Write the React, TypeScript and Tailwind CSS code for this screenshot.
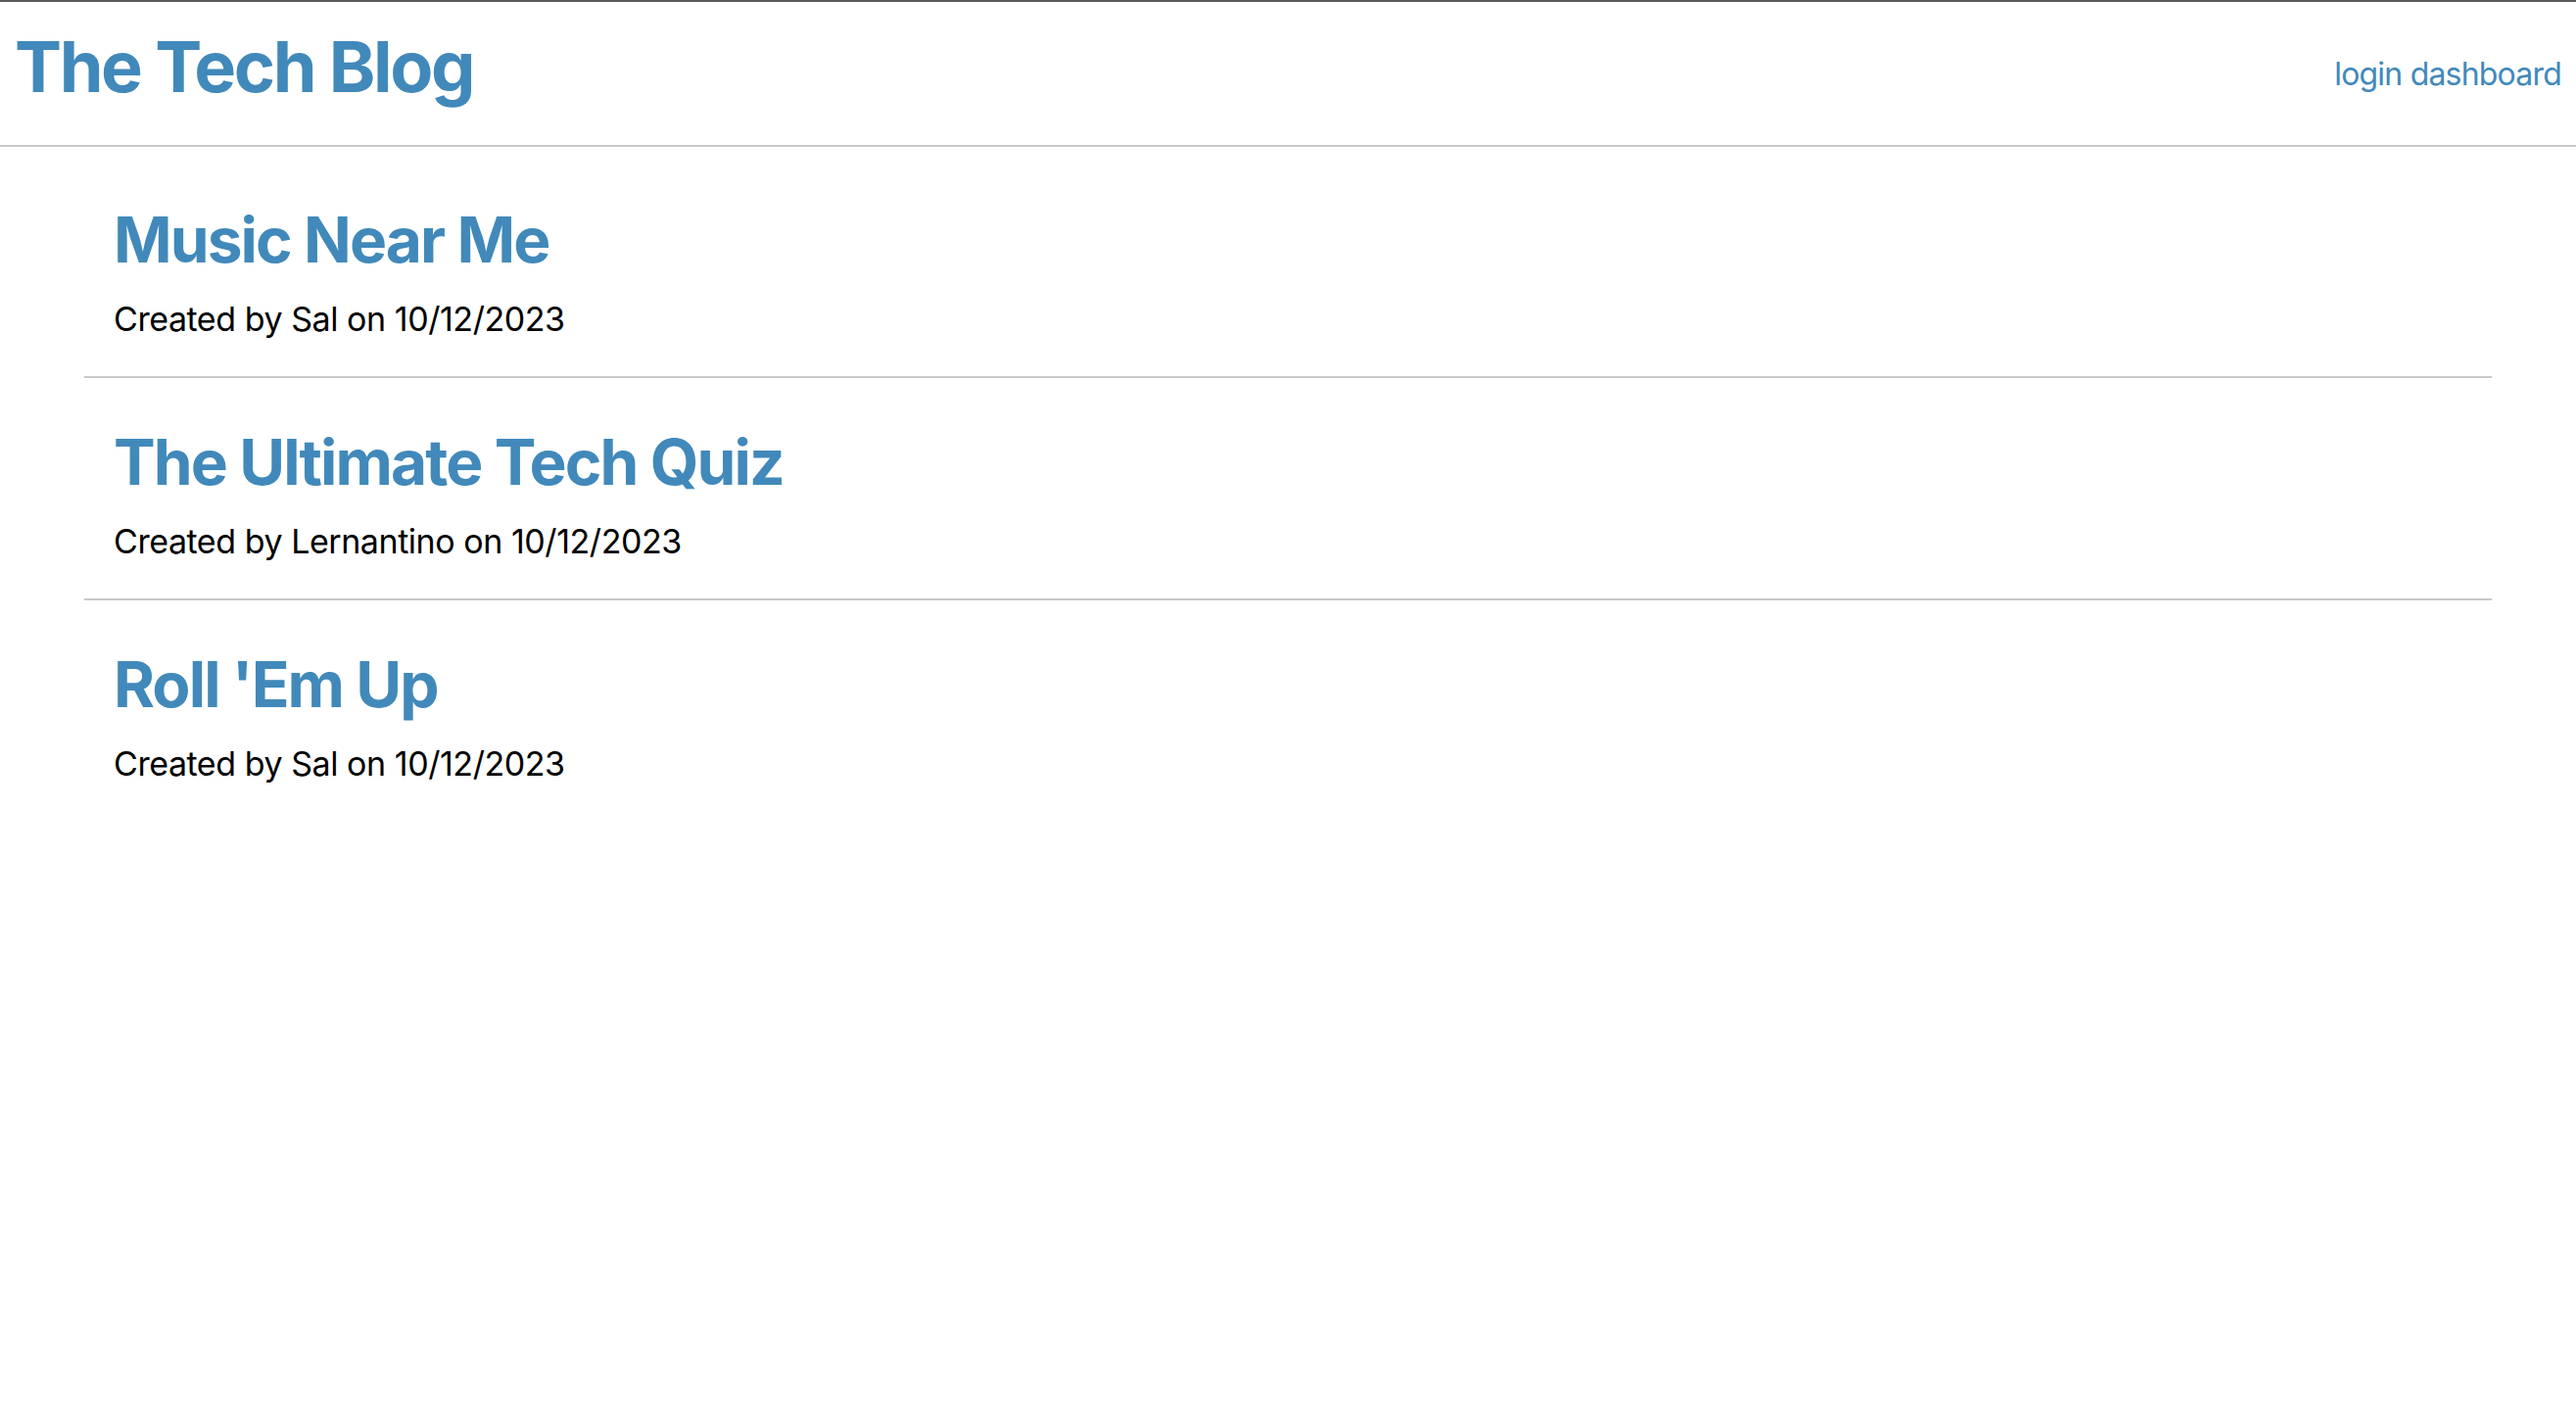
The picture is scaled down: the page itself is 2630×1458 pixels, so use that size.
export default function App() {
  const posts = [
    { title: 'Music Near Me', author: 'Sal', date: '10/12/2023' },
    { title: 'The Ultimate Tech Quiz', author: 'Lernantino', date: '10/12/2023' },
    { title: "Roll 'Em Up", author: 'Sal', date: '10/12/2023' },
  ];

  return (
    <div className="min-h-screen bg-white border-t-2 border-[#5b5b5f] font-['Inter',sans-serif]">
      {/* HEADER */}
      <header className="flex items-start justify-between border-b-2 border-[#c8c8c8] pl-[15px] pr-[15px] pt-[30px] pb-[44px]">
        <h1 className="text-[72px] leading-none font-bold text-[#4189ba] tracking-[-2.4px]">The Tech Blog</h1>
        <nav className="text-[32px] leading-none text-[#4189ba] tracking-[-0.8px] pt-[28px]">
          <a href="/login">login</a> <a href="/dashboard">dashboard</a>
        </nav>
      </header>

      {/* POSTS */}
      <main className="mx-[86px] pt-[9px]">
        {posts.map((post, idx) => (
          <article
            key={idx}
            className={`px-[30px] pt-[54px] pb-[41px] ${idx < posts.length - 1 ? 'border-b-2 border-[#c8c8c8]' : ''}`}
          >
            <h2 className="text-[64px] leading-none font-bold text-[#4189ba] tracking-[-1.9px]">{post.title}</h2>
            <p className="mt-[32px] text-[34px] leading-none text-black tracking-[-0.45px]">
              Created by {post.author} on {post.date}
            </p>
          </article>
        ))}
      </main>
    </div>
  );
}
